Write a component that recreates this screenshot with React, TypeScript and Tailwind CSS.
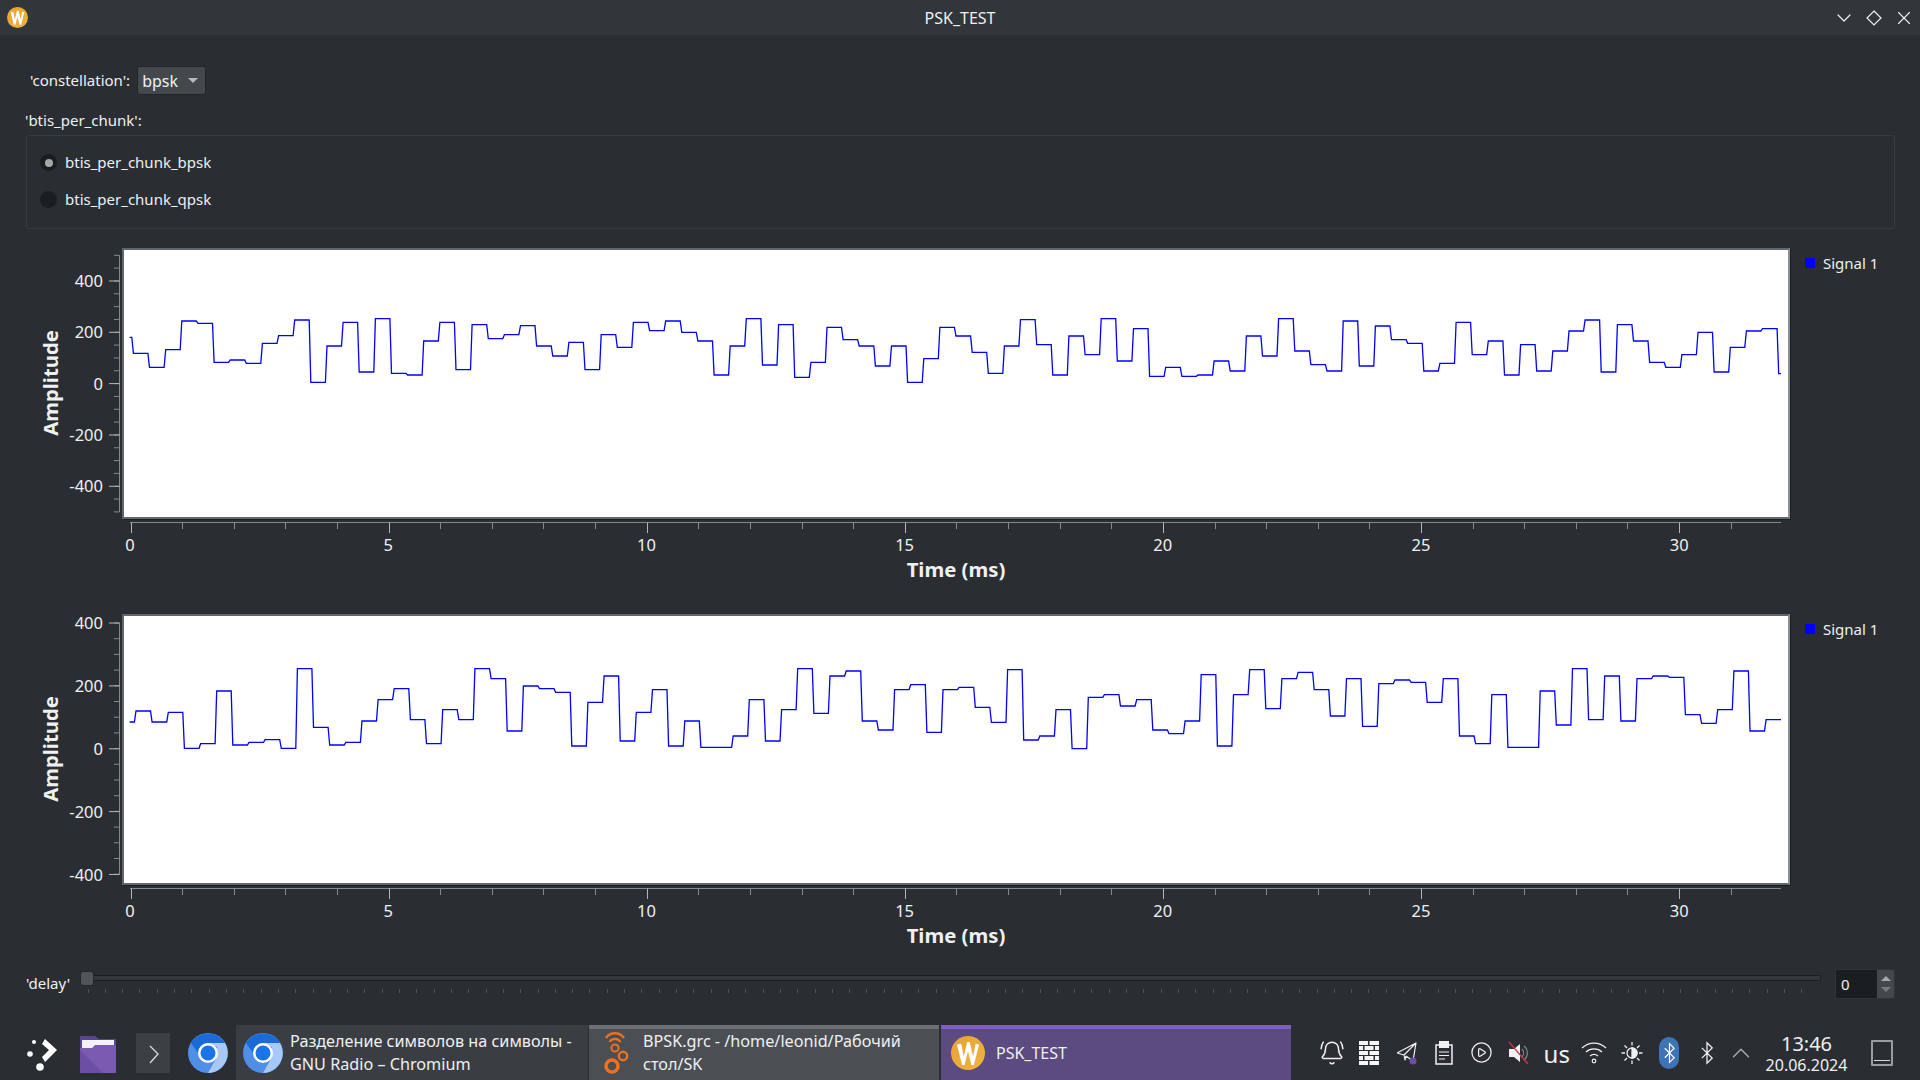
import React from "react";
import { ChevronDown, X, BellRing, CirclePlay, ChevronUp } from "lucide-react";

const P1 = [112,160,202,149,63,70,187,180,190,130,107,60,247,138,67,216,56,220,225,123,67,209,74,116,104,77,138,168,127,209,104,142,67,92,63,97,123,225,
138,56,195,74,232,187,82,119,138,198,138,247,176,82,108,157,220,138,59,134,225,108,164,56,183,86,229,202,229,225,183,213,108,168,56,153,
194,213,63,198,78,119,130,213,190,67,164,123,225,134,213,153,93,60,216,74,123,187,202,164,97,216,142,93,86,221];
const P2 = [216,183,216,187,295,281,123,285,277,269,295,56,232,285,277,213,149,116,209,281,179,209,56,86,243,108,116,127,288,157,78,273,187,119,288,213,292,
292,258,149,273,179,56,190,78,63,213,240,119,104,247,119,112,172,217,59,270,258,179,296,142,134,168,149,240,251,213,74,288,134,59,176,86,
67,119,198,86,229,101,90,97,157,86,258,281,134,292,292,123,225,56,209,78,213,86,78,82,194,220,179,63,243,209];

function wavePoints(levels: number[], top: number, start: number, x1: number, T: number, end: number) {
  const pts: string[] = [];
  levels.forEach((z, i) => {
    const y = top + z / 3;
    const a = i === 0 ? start : x1 + (i - 1) * T;
    const b = i === levels.length - 1 ? end : x1 + i * T - 1.6;
    pts.push(`${a.toFixed(1)},${y.toFixed(1)}`, `${b.toFixed(1)},${y.toFixed(1)}`);
  });
  return pts.join(" ");
}

const TICK = "#858a8e";

function YAxis({ top, ticks, minorStep, first, last }: { top: number; ticks: [number, string][]; minorStep: number; first: number; last: number }) {
  const minors: number[] = [];
  for (let y = first; y <= last + 0.5; y += minorStep) minors.push(y);
  return (
    <svg width={122} height={271} viewBox={`0 ${top} 122 271`} className="shrink-0">
      <line x1={119.5} x2={119.5} y1={first} y2={last} stroke={TICK} />
      {minors.map((y) => (
        <line key={y} x1={114} x2={119.5} y1={y} y2={y} stroke={TICK} />
      ))}
      {ticks.map(([y, t]) => (
        <g key={t}>
          <line x1={109} x2={119.5} y1={y} y2={y} stroke="#b4b7ba" />
          <text x={103} y={y + 6} textAnchor="end" fontSize={16.5} fill="#eff0f1">{t}</text>
        </g>
      ))}
      <text x={0} y={0} transform={`translate(58 ${top + 135}) rotate(-90)`} textAnchor="middle" fontSize={20.3} fontWeight={700} fill="#eff0f1">Amplitude</text>
    </svg>
  );
}

function XAxis({ top }: { top: number }) {
  const ticks = Array.from({ length: 32 }, (_, i) => i);
  return (
    <svg width={1920} height={80} viewBox={`0 ${top} 1920 80`} className="block">
      <line x1={130} x2={1781} y1={top + 3.5} y2={top + 3.5} stroke={TICK} />
      {ticks.map((i) => {
        const x = Math.round(130.5 + i * 51.62) + 0.5;
        const major = i % 5 === 0;
        return <line key={i} x1={x} x2={x} y1={top + 3.5} y2={top + (major ? 14 : 10)} stroke={major ? "#b4b7ba" : TICK} />;
      })}
      {[0, 5, 10, 15, 20, 25, 30].map((t) => (
        <text key={t} x={130 + (t / 5) * 258.2} y={top + 32} textAnchor="middle" fontSize={16.5} fill="#eff0f1">{t}</text>
      ))}
      <text x={956} y={top + 58} textAnchor="middle" fontSize={20.3} fontWeight={700} fill="#eff0f1">Time (ms)</text>
    </svg>
  );
}

function Plot({ top, points, ticks, minorStep, first, last }: { top: number; points: string; ticks: [number, string][]; minorStep: number; first: number; last: number }) {
  return (
    <div className="flex flex-col">
      <div className="flex h-[271px]">
        <YAxis top={top} ticks={ticks} minorStep={minorStep} first={first} last={last} />
        <div className="w-[1668px] h-[271px] shrink-0 border-2 border-[#5f666c] border-r-[#8b9094] bg-white shadow-[1px_1px_0_#1b1e21]">
          <svg width={1664} height={267} viewBox={`124 ${top + 2} 1664 267`} className="block">
            <polyline points={points} fill="none" stroke="#0000ff" strokeWidth={1.3} strokeLinejoin="miter" />
          </svg>
        </div>
        <div className="ml-[15px] mt-[4px] flex items-center h-[22px] gap-[8px] text-[15px] text-[#eff0f1]">
          <span className="w-[10px] h-[10px] bg-[#0000ff]" />
          <span>Signal 1</span>
        </div>
      </div>
      <XAxis top={top + 271} />
    </div>
  );
}

function WLogo({ size, id }: { size: number; id: string }) {
  return (
    <svg width={size} height={size} viewBox="0 0 40 40" className="shrink-0">
      <defs>
        <linearGradient id={id} x1="0" x2="1" y1="0" y2="1">
          <stop offset="0" stopColor="#e6a13a" />
          <stop offset="1" stopColor="#f0b53c" />
        </linearGradient>
      </defs>
      <circle cx="20" cy="20" r="20" fill={`url(#${id})`} />
      <path d="M7 10 L12 9 L15 24 L19 7 L22 7 L26 24 L29 9 L33 10 L27 34 L24 34 L20 18 L16 34 L13 34 Z" fill="#fff" />
    </svg>
  );
}

function Chrome({ size }: { size: number }) {
  return (
    <svg width={size} height={size} viewBox="0 0 40 40" className="shrink-0">
      <circle cx="20" cy="20" r="20" fill="#4f8fe8" />
      <path d="M3 10 A20 20 0 0 1 37 10 L20 10 A10 10 0 0 0 10 20 Z" fill="#1b6bd6" />
      <path d="M37 10 A20 20 0 0 1 20 40 L29 24 L29 14 L20 10 Z" fill="#a8c8f8" />
      <circle cx="20" cy="20" r="10" fill="#fff" />
      <circle cx="20" cy="20" r="7.5" fill="#1a73e8" />
    </svg>
  );
}

function Kicker() {
  return (
    <svg width={32} height={36} viewBox="0 0 32 36">
      <circle cx="7" cy="7" r="2" fill="#fff" />
      <circle cx="3" cy="19" r="2.8" fill="#fff" />
      <circle cx="13" cy="32" r="3.8" fill="#fff" />
      <path d="M18 4 L30 15 L18 27 L15 22 L22 15 L15 9 Z" fill="#fff" />
    </svg>
  );
}

function Folder() {
  return (
    <svg width={36} height={40} viewBox="0 0 36 40">
      <path d="M0 3 H15 L19 6 H36 V40 H0 Z" fill="#5a4690" />
      <rect x="2" y="7" width="32" height="10" fill="#f4f2f8" />
      <path d="M0 15 H12 L15 12 H36 V40 H0 Z" fill="#7a5bb0" />
      <path d="M0 17 L23 40 H0 Z" fill="#6a4fa3" />
    </svg>
  );
}

function Terminal() {
  return (
    <svg width={34} height={40} viewBox="0 0 34 40">
      <rect width="34" height="40" rx="1" fill="#3b4043" />
      <path d="M14 13 L22 21 L14 30" fill="none" stroke="#d5d7d8" strokeWidth="1.4" />
    </svg>
  );
}

function GnuRadio() {
  return (
    <svg width={26} height={46} viewBox="0 0 26 46" className="shrink-0">
      <g fill="none" stroke="#f0701e">
        <path d="M2 8 A11 11 0 0 1 20 8" strokeWidth="2.4" />
        <path d="M5.5 12 A6.5 6.5 0 0 1 16.5 12" strokeWidth="2.2" />
        <circle cx="11" cy="18" r="3.6" strokeWidth="2" />
        <circle cx="19" cy="26" r="4.2" strokeWidth="2.4" />
        <circle cx="8" cy="36" r="6" strokeWidth="3.4" />
      </g>
    </svg>
  );
}

function Bricks() {
  return (
    <svg width={20} height={24} viewBox="0 0 20 24" fill="#f4f5f5">
      <rect x="0" y="0" width="9" height="4" />
      <rect x="10.5" y="0" width="9.5" height="4" />
      <rect x="0" y="5" width="4" height="4" />
      <rect x="5.5" y="5" width="9" height="4" />
      <rect x="16" y="5" width="4" height="4" />
      <rect x="0" y="10" width="9" height="4" />
      <rect x="10.5" y="10" width="9.5" height="4" />
      <rect x="0" y="15" width="4" height="4" />
      <rect x="5.5" y="15" width="9" height="4" />
      <rect x="16" y="15" width="4" height="4" />
      <rect x="0" y="20" width="9" height="4" />
      <rect x="10.5" y="20" width="9.5" height="4" />
    </svg>
  );
}

function Telegram() {
  return (
    <svg width={22} height={24} viewBox="0 0 22 24" fill="none">
      <path d="M1 12 L20 2 L17 20 L10 15 M1 12 L8 14 L20 2 M8 14 L9 19 L10 15" stroke="#eff0f1" strokeWidth="1.2" strokeLinejoin="round" />
      <circle cx="17" cy="20" r="3.6" fill="#6a4fa3" />
    </svg>
  );
}

function Clip() {
  return (
    <svg width={18} height={24} viewBox="0 0 18 24" fill="none">
      <rect x="1" y="4" width="16" height="19" stroke="#eff0f1" strokeWidth="1.5" />
      <rect x="4" y="0" width="10" height="7" fill="#eff0f1" />
      <path d="M4 11 H14 M4 14.5 H14 M4 18 H10" stroke="#eff0f1" strokeWidth="1.2" />
    </svg>
  );
}

function Mute() {
  return (
    <svg width={22} height={24} viewBox="0 0 22 24" fill="none">
      <path d="M1 8 H6 L12 3 V21 L6 16 H1 Z" fill="#f2f3f3" />
      <path d="M14 8 A6 6 0 0 1 14 16 M16 5 A9 9 0 0 1 16 19" stroke="#7f8488" strokeWidth="1.2" />
      <path d="M1 1 L20 23" stroke="#d3344a" strokeWidth="1.3" />
    </svg>
  );
}

function WifiIcon() {
  return (
    <svg width={26} height={24} viewBox="0 0 26 24" fill="none" stroke="#eff0f1">
      <path d="M1 7 A17 17 0 0 1 25 7" strokeWidth="1.2" />
      <path d="M5 11 A12 12 0 0 1 21 11" strokeWidth="1.2" />
      <path d="M9 15 A6.5 6.5 0 0 1 17 15" strokeWidth="1.2" />
      <circle cx="13" cy="20" r="1.8" strokeWidth="1.2" />
    </svg>
  );
}

function Brightness() {
  return (
    <svg width={22} height={24} viewBox="0 0 22 24" fill="none" stroke="#eff0f1" strokeWidth="1.3">
      <circle cx="11" cy="12" r="5" />
      <path d="M11 7 A5 5 0 0 1 11 17 Z" fill="#eff0f1" />
      <path d="M11 1 V4.5 M11 19.5 V23 M0.5 12 H4 M18 12 H21.5 M3.5 4.5 L6 7 M16 17 L18.5 19.5 M3.5 19.5 L6 17 M16 7 L18.5 4.5" />
    </svg>
  );
}

function BtGlyph({ stroke, w, h }: { stroke: string; w: number; h: number }) {
  return (
    <svg width={w} height={h} viewBox="0 0 14 26" fill="none" stroke={stroke} strokeWidth="1.5">
      <path d="M1 7 L13 19 L7 25 V1 L13 7 L1 19" />
    </svg>
  );
}

function TrayCell({ children }: { children: React.ReactNode }) {
  return <div className="w-[37.5px] h-full flex items-center justify-center shrink-0">{children}</div>;
}

function Slider() {
  const ticks = Array.from({ length: 101 }, (_, i) => 87.5 + i * 17.31);
  return (
    <div className="relative w-[1741px] h-[30px] shrink-0">
      <div className="absolute left-0 right-0 top-[6px] h-[6px] bg-[#33383c] border border-[#1b1e21] rounded-[1px]" />
      <div className="absolute left-0 top-[2px] w-[14px] h-[15px] rounded-[3px] bg-[#50555a] border border-[#24272a]" />
      <svg width={1741} height={6} viewBox="80 0 1741 6" className="absolute left-0 top-[20px]">
        {ticks.filter((x) => x < 1815).map((x) => (
          <line key={x} x1={Math.round(x) + 0.5} x2={Math.round(x) + 0.5} y1={0} y2={4} stroke="#4d5256" />
        ))}
      </svg>
    </div>
  );
}

export default function App() {
  const p1 = wavePoints(P1, 300, 129.6, 133.4, 16.13, 1781);
  const p2 = wavePoints(P2, 650, 129.6, 136, 16.14, 1781);
  return (
    <div className="w-[1920px] h-[1080px] overflow-hidden flex flex-col bg-[#2a2e32] text-[#eff0f1] font-['Noto_Sans',sans-serif]">
      <div className="h-[35px] shrink-0 flex items-center bg-[#31363b]">
        <div className="w-[93px] pl-[7px] shrink-0"><WLogo size={21} id="wg1" /></div>
        <div className="flex-1 text-center text-[16px]">PSK_TEST</div>
        <div className="w-[93px] shrink-0 flex items-center pl-[2px]">
          <div className="w-[30px] flex justify-center"><ChevronDown size={24} strokeWidth={1.2} color="#eff0f1" /></div>
          <div className="w-[30px] flex justify-center">
            <svg width={16} height={16} viewBox="0 0 16 16" fill="none" stroke="#eff0f1" strokeWidth="1.2"><path d="M8 1 L15 8 L8 15 L1 8 Z" /></svg>
          </div>
          <div className="w-[30px] flex justify-center"><X size={22} strokeWidth={1.2} color="#eff0f1" /></div>
        </div>
      </div>

      <div className="flex-1 min-h-0 flex flex-col">
        <div className="mt-[31px] ml-[30px] h-[29px] flex items-center text-[15px]">
          <span>'constellation':</span>
          <div className="ml-[7px] w-[69px] h-[29px] flex items-center justify-between pl-[4px] pr-[7px] rounded-[3px] border border-[#22262a] bg-[#43484d]">
            <span className="text-[16px]">bpsk</span>
            <span className="w-0 h-0 border-l-[5px] border-r-[5px] border-t-[5px] border-l-transparent border-r-transparent border-t-[#b8babc]" />
          </div>
        </div>
        <div className="mt-[14px] ml-[25px] h-[22px] leading-[22px] text-[15px]">'btis_per_chunk':</div>
        <div className="mt-[4px] ml-[26px] w-[1869px] h-[94px] rounded-[3px] border border-[#373c40] flex flex-col gap-[14px] pt-[15px] pl-[13px]">
          <div className="flex items-center gap-[8px] h-[23px] text-[15px]">
            <span className="w-[17px] h-[17px] rounded-full bg-[#1b1e21] flex items-center justify-center">
              <span className="w-[8px] h-[8px] rounded-full bg-[#a5a7a8]" />
            </span>
            <span>btis_per_chunk_bpsk</span>
          </div>
          <div className="flex items-center gap-[8px] h-[23px] text-[15px]">
            <span className="w-[17px] h-[17px] rounded-full bg-[#1b1e21]" />
            <span>btis_per_chunk_qpsk</span>
          </div>
        </div>

        <div className="mt-[19px] flex flex-col gap-[15px]">
          <Plot top={248} points={p1} minorStep={12.83} first={255.3} last={511.9}
            ticks={[[281, "400"], [332.3, "200"], [383.6, "0"], [435, "-200"], [486.3, "-400"]]} />
          <Plot top={614} points={p2} minorStep={15.7} first={623} last={874.5}
            ticks={[[623, "400"], [685.9, "200"], [748.8, "0"], [811.6, "-200"], [874.5, "-400"]]} />
        </div>

        <div className="mt-[4px] h-[30px] flex">
          <div className="w-[80px] shrink-0 pl-[26px] pt-[3px] text-[15px] leading-[22px]">'delay'</div>
          <Slider />
          <div className="ml-[14px] w-[60px] h-[30px] rounded-[3px] bg-[#1b1e21] border border-[#31363b] flex overflow-hidden">
            <div className="flex-1 pl-[5px] text-[15px] leading-[28px]">0</div>
            <div className="w-[17px] bg-[#43484d] flex flex-col items-center justify-center gap-[6px]">
              <span className="w-0 h-0 border-l-[5px] border-r-[5px] border-b-[5px] border-l-transparent border-r-transparent border-b-[#a5a8aa]" />
              <span className="w-0 h-0 border-l-[5px] border-r-[5px] border-t-[5px] border-l-transparent border-r-transparent border-t-[#797d80]" />
            </div>
          </div>
        </div>
      </div>

      <div className="h-[55px] shrink-0 flex items-stretch">
        <div className="w-[236px] shrink-0 pl-[15px] flex">
          <div className="w-[55px] flex items-center justify-center"><Kicker /></div>
          <div className="w-[55px] flex items-center justify-center"><Folder /></div>
          <div className="w-[55px] flex items-center justify-center"><Terminal /></div>
          <div className="w-[55px] flex items-center justify-center"><Chrome size={40} /></div>
        </div>
        <div className="w-[352px] shrink-0 bg-[#3a3e43] flex items-center pl-[7px] gap-[7px]">
          <Chrome size={40} />
          <div className="text-[16.2px] leading-[23px] w-[295px]">Разделение символов на символы - GNU Radio – Chromium</div>
        </div>
        <div className="ml-[1px] w-[350px] shrink-0 bg-[#4b4f54] border-t-[4px] border-[#6c7070] flex items-center pl-[15px] pb-[3px] gap-[13px]">
          <GnuRadio />
          <div className="text-[16.2px] leading-[23px] w-[290px]">BPSK.grc - /home/leonid/Рабочий стол/SK</div>
        </div>
        <div className="ml-[2px] w-[350px] shrink-0 bg-[#5b4b80] border-t-[4px] border-[#7e5fc8] flex items-center pl-[10px] pb-[3px] gap-[7px]">
          <WLogo size={34} id="wg2" />
          <div className="ml-[4px] text-[16px]">PSK_TEST</div>
        </div>
        <div className="ml-[22px] flex items-stretch">
          <TrayCell><BellRing size={26} strokeWidth={1.4} color="#eff0f1" /></TrayCell>
          <TrayCell><Bricks /></TrayCell>
          <TrayCell><Telegram /></TrayCell>
          <TrayCell><Clip /></TrayCell>
          <TrayCell><CirclePlay size={23} strokeWidth={1.3} color="#eff0f1" /></TrayCell>
          <TrayCell><Mute /></TrayCell>
          <TrayCell><span className="text-[24px] leading-none pt-[2px]">us</span></TrayCell>
          <TrayCell><WifiIcon /></TrayCell>
          <TrayCell><Brightness /></TrayCell>
          <TrayCell>
            <span className="w-[20px] h-[32px] rounded-full bg-[#3d74b5] flex items-center justify-center"><BtGlyph stroke="#fff" w={11} h={22} /></span>
          </TrayCell>
          <TrayCell><BtGlyph stroke="#eff0f1" w={12} h={24} /></TrayCell>
          <div className="w-[31px] shrink-0 flex items-center justify-center"><ChevronUp size={30} strokeWidth={1.2} color="#a8abad" /></div>
          <div className="w-[100px] shrink-0 flex flex-col items-center justify-center">
            <div className="text-[20px] leading-[24px]">13:46</div>
            <div className="text-[16px] leading-[18px]">20.06.2024</div>
          </div>
          <div className="w-[51px] shrink-0 flex items-center justify-center">
            <div className="w-[22px] h-[26px] border-2 border-[#9a9da0] rounded-[1px] flex items-end justify-center pb-[3px]">
              <span className="w-[16px] h-[1px] bg-[#d5d7d8]" />
            </div>
          </div>
        </div>
      </div>
    </div>
  );
}
